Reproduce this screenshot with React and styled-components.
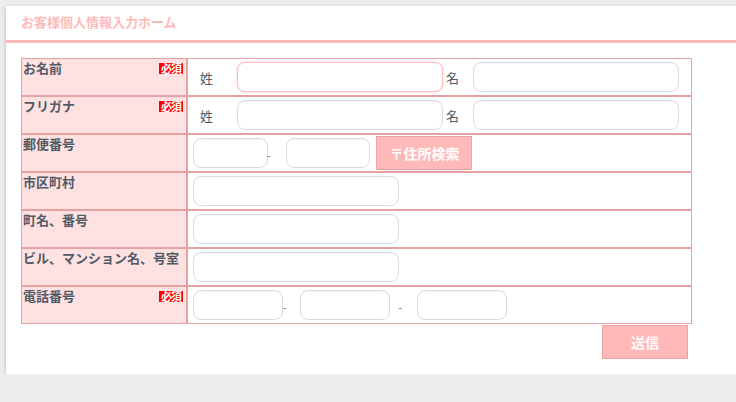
import React from 'react';
import styled, { createGlobalStyle } from 'styled-components';

const GlobalStyle = createGlobalStyle`
  html, body {
    margin: 0;
    padding: 0;
    background: #ececec;
    overflow: hidden;
  }
  body {
    font-family: "Noto Sans CJK JP", "Noto Sans", sans-serif;
    color: #4f5b66;
  }
`;

const App = () => {
  return (
    <>
      <GlobalStyle />
      <Card>
        <Header>
          <Title>お客様個人情報入力ホーム</Title>
        </Header>
        <Body>
          <FormTable>
            <tbody>
              <tr>
                <LabelCell>
                  <LabelInner>
                    <span>お名前</span>
                    <Required>必須</Required>
                  </LabelInner>
                </LabelCell>
                <FieldCell>
                  <FieldRow>
                    <SubLabel $w={44}>姓</SubLabel>
                    <Input $w={206} $focused />
                    <SubLabel $w={27} $ml={3} $pl={0}>名</SubLabel>
                    <Input $w={206} />
                  </FieldRow>
                </FieldCell>
              </tr>
              <tr>
                <LabelCell>
                  <LabelInner>
                    <span>フリガナ</span>
                    <Required>必須</Required>
                  </LabelInner>
                </LabelCell>
                <FieldCell>
                  <FieldRow>
                    <SubLabel $w={44}>姓</SubLabel>
                    <Input $w={206} />
                    <SubLabel $w={27} $ml={3} $pl={0}>名</SubLabel>
                    <Input $w={206} />
                  </FieldRow>
                </FieldCell>
              </tr>
              <tr>
                <LabelCell>
                  <LabelInner>
                    <span>郵便番号</span>
                  </LabelInner>
                </LabelCell>
                <FieldCell>
                  <FieldRow>
                    <Input $w={75} />
                    <Dash $ml={-1} $mr={16}>-</Dash>
                    <Input $w={84} />
                    <SearchButton>〒住所検索</SearchButton>
                  </FieldRow>
                </FieldCell>
              </tr>
              <tr>
                <LabelCell>
                  <LabelInner>
                    <span>市区町村</span>
                  </LabelInner>
                </LabelCell>
                <FieldCell>
                  <FieldRow>
                    <Input $w={206} />
                  </FieldRow>
                </FieldCell>
              </tr>
              <tr>
                <LabelCell>
                  <LabelInner>
                    <span>町名、番号</span>
                  </LabelInner>
                </LabelCell>
                <FieldCell>
                  <FieldRow>
                    <Input $w={206} />
                  </FieldRow>
                </FieldCell>
              </tr>
              <tr>
                <LabelCell>
                  <LabelInner>
                    <span>ビル、マンション名、号室</span>
                  </LabelInner>
                </LabelCell>
                <FieldCell>
                  <FieldRow>
                    <Input $w={206} />
                  </FieldRow>
                </FieldCell>
              </tr>
              <tr>
                <LabelCell>
                  <LabelInner>
                    <span>電話番号</span>
                    <Required>必須</Required>
                  </LabelInner>
                </LabelCell>
                <FieldCell>
                  <FieldRow>
                    <Input $w={90} />
                    <Dash $ml={0} $mr={14}>-</Dash>
                    <Input $w={90} />
                    <Dash $ml={8} $mr={15}>-</Dash>
                    <Input $w={90} />
                  </FieldRow>
                </FieldCell>
              </tr>
            </tbody>
          </FormTable>
          <Actions>
            <SubmitButton>送信</SubmitButton>
          </Actions>
        </Body>
      </Card>
    </>
  );
};

const Card = styled.div`
  margin: 6px 0 0 6px;
  width: 760px;
  background: #fff;
  box-shadow: 0 1px 4px rgba(0, 0, 0, 0.22);
`;

const Header = styled.div`
  height: 34px;
  padding: 0 15px;
  border-bottom: 3px solid #ffb6b6;
  display: flex;
  align-items: center;
`;

const Title = styled.h1`
  margin: 0 0 3px 0;
  font-size: 13px;
  font-weight: 700;
  color: #ffb9b9;
  letter-spacing: 0;
`;

const Body = styled.div`
  padding: 15px 0 15px 15px;
  width: 671px;
`;

const FormTable = styled.table`
  width: 671px;
  border-collapse: separate;
  border-spacing: 0;
  table-layout: fixed;
`;

const LabelCell = styled.td`
  width: 166px;
  height: 38px;
  box-sizing: border-box;
  background: #ffe1e1;
  border: 1px solid #e4a2a2;
  vertical-align: top;
  padding: 1px 3px 0 1px;
`;

const LabelInner = styled.div`
  display: flex;
  justify-content: space-between;
  align-items: flex-start;
  font-size: 13px;
  font-weight: 700;
  line-height: 16px;
  color: #4f5b66;
  white-space: nowrap;
`;

const Required = styled.span`
  margin-top: 3px;
  background: #ff0000;
  color: #fff;
  font-size: 11px;
  font-weight: 700;
  line-height: 11px;
  height: 11px;
  padding: 0 2px;
  letter-spacing: -1px;
`;

const FieldCell = styled.td`
  height: 38px;
  box-sizing: border-box;
  background: #fff;
  border: 1px solid #e4a2a2;
  padding: 0 0 0 5px;
  vertical-align: middle;
`;

const FieldRow = styled.div`
  display: flex;
  align-items: center;
`;

const SubLabel = styled.span`
  box-sizing: border-box;
  width: ${(p) => p.$w}px;
  margin-left: ${(p) => p.$ml || 0}px;
  padding-left: ${(p) => (p.$pl === undefined ? 7 : p.$pl)}px;
  font-size: 13px;
  color: #4f5b66;
`;

const Input = styled.input`
  box-sizing: border-box;
  width: ${(p) => p.$w}px;
  height: 30px;
  margin: 0;
  padding: 0 8px;
  border-radius: 8px;
  border: 1px solid ${(p) => (p.$focused ? '#ffbdbd' : '#d6dde2')};
  box-shadow: ${(p) =>
    p.$focused ? '0 0 2px rgba(255, 160, 160, 0.6)' : 'inset 0 1px 1px rgba(0,0,0,0.04)'};
  background: #fff;
  outline: none;
  font-size: 12px;
`;

const Dash = styled.span`
  margin-left: ${(p) => p.$ml}px;
  margin-right: ${(p) => p.$mr}px;
  font-size: 10px;
  line-height: 10px;
  color: #4f5b66;
  padding-top: 4px;
`;

const SearchButton = styled.button`
  box-sizing: border-box;
  margin-left: 6px;
  width: 96px;
  height: 34px;
  background: #ffb9b9;
  border: 1px solid #e9a3a3;
  color: #fff;
  font-family: "Noto Sans CJK JP", sans-serif;
  font-size: 14px;
  font-weight: 700;
  padding: 0;
`;

const Actions = styled.div`
  display: flex;
  justify-content: flex-end;
  padding-right: 4px;
`;

const SubmitButton = styled.button`
  box-sizing: border-box;
  margin-top: 1px;
  width: 86px;
  height: 34px;
  background: #ffb9b9;
  border: 1px solid #e9a3a3;
  color: #fff;
  font-family: "Noto Sans CJK JP", sans-serif;
  font-size: 14px;
  font-weight: 700;
  padding: 0;
`;

export default App;
